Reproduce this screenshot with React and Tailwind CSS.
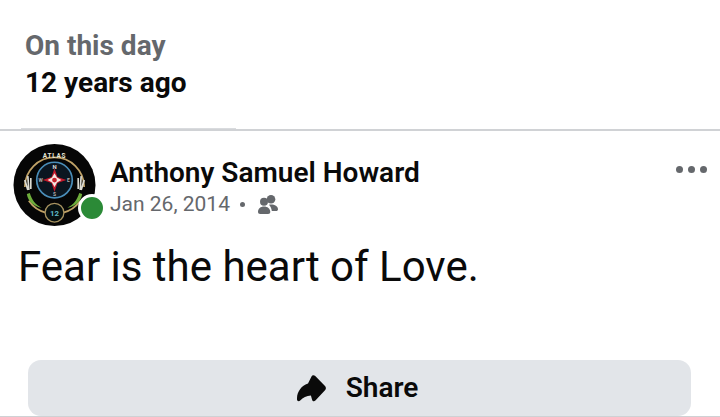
const font = { fontFamily: "Roboto, sans-serif" };

function Avatar() {
  return (
    <div className="relative h-[84px] w-[83px] shrink-0">
      <svg viewBox="0 0 84 84" className="h-[84px] w-[83px]">
        <circle cx="42" cy="42" r="41.5" fill="#060606" />
        <path d="M12 44a30 30 0 0 1 60 0" fill="none" stroke="#c0a267" strokeWidth="1.8" />
        <path d="M16 58a30 30 0 0 0 17 12M68 58a30 30 0 0 1-17 12" fill="none" stroke="#c0a267" strokeWidth="1.8" />
        <circle cx="42" cy="37" r="18" fill="#0b1620" stroke="#4a8db8" strokeWidth="1.7" />
        <path d="M42 25l3 9 9 3-9 3-3 9-3-9-9-3 9-3z" fill="#c2182a" />
        <path d="M42 30l2.500 4.500 4.500 2.500-4.500 2.500-2.500 4.500-2.500-4.500-4.500-2.500 4.500-2.500z" fill="#f3e6e0" />
        <circle cx="42" cy="37" r="2.400" fill="#c8202c" />
        <path d="M17 50c2 7 6 12 12 15-7-1-14-6-15-14zM67 50c-2 7-6 12-12 15 7-1 14-6 15-14z" fill="#6fae3c" />
        <path d="M15 33l1 14M12 37l3 10M18 35l0 11M69 33l-1 14M72 37l-3 10M66 35l0 11" stroke="#dcdcd4" strokeWidth="1.700" />
        <circle cx="42" cy="70" r="9.500" fill="#07100f" stroke="#a89360" strokeWidth="1.300" />
        <text x="42" y="73" textAnchor="middle" fontSize="8" fontWeight="700" fill="#5fbccb" style={font}>12</text>
        <text x="42" y="15" textAnchor="middle" fontSize="6.500" fontWeight="700" letterSpacing="0.8" fill="#e6e6d8" style={font}>ATLAS</text>
        <text x="42" y="26" textAnchor="middle" fontSize="6" fontWeight="700" fill="#d8d8d8" style={font}>N</text>
        <text x="42" y="53" textAnchor="middle" fontSize="5" fontWeight="700" fill="#b0b0b0" style={font}>S</text>
        <text x="28" y="39" textAnchor="middle" fontSize="5" fontWeight="700" fill="#b0b0b0" style={font}>W</text>
        <text x="56" y="39" textAnchor="middle" fontSize="5" fontWeight="700" fill="#b0b0b0" style={font}>E</text>
      </svg>
      <span className="absolute left-[65px] top-[51px] h-[28px] w-[28px] rounded-full border-[3px] border-white bg-[#2b8a37]" />
    </div>
  );
}

function PeopleIcon() {
  return (
    <svg viewBox="0 0 20 19" className="h-[19px] w-[20px]" fill="#65686c">
      <circle cx="13" cy="4.300" r="4.300" />
      <circle cx="6" cy="6.800" r="4" />
      <path d="M11 9.800c.6-.2 1.300-.3 2-.3 3.900 0 7 2 7 4.700 0 1.100-.7 1.800-1.800 1.800h-4.400c-.2-2-1.100-4.400-2.800-6.200z" />
      <path d="M6 11.500c3.500 0 6.300 2.200 6.300 5.300 0 1.400-.8 2.200-2.200 2.200H2.200C.8 19 0 18.200 0 16.800c0-3.100 2.600-5.300 6-5.300z" />
    </svg>
  );
}

function ShareIcon() {
  return (
    <svg viewBox="0 0 29 27" className="h-[27px] w-[29px]" fill="#0a0a0a">
      <path d="M14.500 1.500c.8-1.500 2.300-1.800 3.500-.7l10 10.300c1.200 1.200 1.200 3 0 4.200L18.400 25.500c-1.200 1.200-2.800.9-3.300-.8l-1.200-4.200c-4.300.2-8 1.900-10.700 4.900-1.200 1.300-3.100.8-3.200-1-.3-6.800 3.800-13.500 11-15.800z" />
    </svg>
  );
}

export default function App() {
  return (
    <div className="flex h-[417px] w-[720px] flex-col overflow-hidden bg-white" style={font}>
      <div className="h-[128px] shrink-0 px-[25px] pt-[29px]">
        <div className="text-[28px] font-bold leading-[33px] text-[#65686c]">On this day</div>
        <div className="mt-[4px] text-[28px] font-bold leading-[33px] text-[#0a0a0a]">12 years ago</div>
      </div>
      <div className="ml-[21px] h-px w-[215px] shrink-0 bg-[#d9dbde]" />
      <div className="h-[2px] shrink-0 bg-[#d0d2d5]" />
      <div className="flex shrink-0 items-start pl-[13px] pr-[13px] pt-[12px]">
        <Avatar />
        <div className="ml-[14px] min-w-0 flex-1 pt-[12px]">
          <div className="text-[28px] font-semibold leading-[35px] text-[#0a0a0a]">Anthony Samuel Howard</div>
          <div className="mt-[1px] flex items-center text-[21px] leading-[27px] text-[#65686c]">
            <span>Jan 26, 2014</span>
            <span className="ml-[10px] h-[5px] w-[5px] rounded-full bg-[#65686c]" />
            <span className="ml-[13px]"><PeopleIcon /></span>
          </div>
        </div>
        <div className="mt-[23px] flex gap-[5px]">
          <span className="h-[7px] w-[7px] rounded-full bg-[#65686c]" />
          <span className="h-[7px] w-[7px] rounded-full bg-[#65686c]" />
          <span className="h-[7px] w-[7px] rounded-full bg-[#65686c]" />
        </div>
      </div>
      <div className="mt-[12px] h-[66px] shrink-0 pl-[18px] text-[42px] leading-[56px] text-[#0a0a0a]">Fear is the heart of Love.</div>
      <div className="mt-auto pl-[28px] pr-[29px]">
        <div className="flex h-[56px] items-center justify-center gap-[20px] rounded-[13px] bg-[#e2e5e9] pr-[4px]">
          <ShareIcon />
          <span className="text-[28px] font-semibold text-[#0a0a0a]">Share</span>
        </div>
      </div>
      <div className="h-px shrink-0 bg-[#cfd1d4]" />
    </div>
  );
}
